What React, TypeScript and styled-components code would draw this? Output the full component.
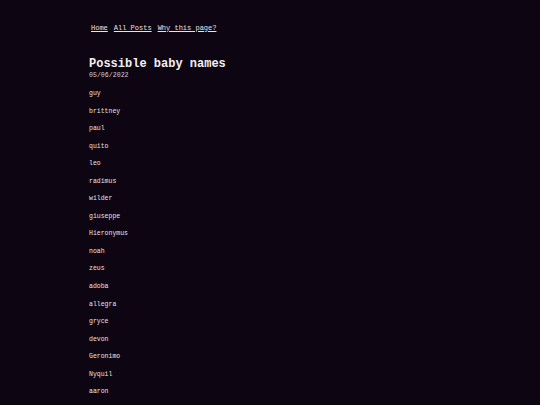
import React from "react";
import styled, { createGlobalStyle } from "styled-components";

const names = [
  "guy",
  "brittney",
  "paul",
  "quito",
  "leo",
  "radimus",
  "wilder",
  "giuseppe",
  "Hieronymus",
  "noah",
  "zeus",
  "adoba",
  "allegra",
  "gryce",
  "devon",
  "Geronimo",
  "Nyquil",
  "aaron",
];

const GlobalStyle = createGlobalStyle`
  html, body {
    margin: 0;
    padding: 0;
    background: #0d0511;
  }
  body {
    font-family: "Liberation Mono", "DejaVu Sans Mono", monospace;
    color: #e6e3e8;
  }
`;

const Page = styled.main`
  height: 405px;
  overflow: hidden;
  padding: 22px 0 0 89px;
  box-sizing: border-box;
`;

const Nav = styled.nav`
  display: flex;
  gap: 6px;
  padding-left: 2px;
  height: 11px;
  align-items: center;
`;

const NavLink = styled.a`
  color: #e6e3e8;
  font-size: 7px;
  text-decoration: underline;
`;

const Title = styled.h1`
  margin: 24px 0 0;
  font-size: 12px;
  line-height: 14px;
  font-weight: bold;
  color: #f2f0f3;
`;

const DateLine = styled.div`
  font-size: 6.6px;
  line-height: 8px;
  margin-top: 1px;
  color: #d6d2d8;
`;

const NameList = styled.ul`
  list-style: none;
  margin: 10px 0 0;
  padding: 0;
  display: flex;
  flex-direction: column;
  gap: 9.55px;
`;

const Name = styled.li`
  font-size: 6.5px;
  line-height: 8px;
  color: #e6e3e8;
`;

export default function App() {
  return (
    <>
      <GlobalStyle />
      <Page>
        <Nav>
          <NavLink href="#">Home</NavLink>
          <NavLink href="#">All Posts</NavLink>
          <NavLink href="#">Why this page?</NavLink>
        </Nav>
        <Title>Possible baby names</Title>
        <DateLine>05/06/2022</DateLine>
        <NameList>
          {names.map((n) => (
            <Name key={n}>{n}</Name>
          ))}
        </NameList>
      </Page>
    </>
  );
}
